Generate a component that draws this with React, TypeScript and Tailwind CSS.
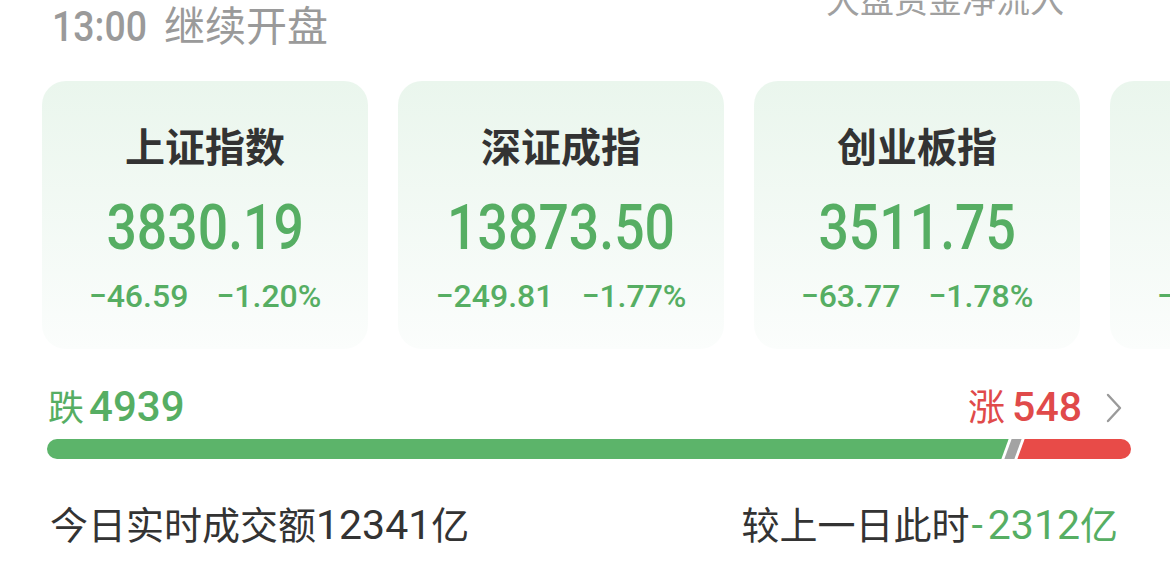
import React from "react";

type IndexQuote = {
  name: string;
  price: string;
  change: string;
  pct: string;
};

const quotes: IndexQuote[] = [
  { name: "上证指数", price: "3830.19", change: "−46.59", pct: "−1.20%" },
  { name: "深证成指", price: "13873.50", change: "−249.81", pct: "−1.77%" },
  { name: "创业板指", price: "3511.75", change: "−63.77", pct: "−1.78%" },
  { name: "科创50", price: "1326.48", change: "−25.14", pct: "−1.86%" },
];

function IndexCard({ quote }: { quote: IndexQuote }) {
  return (
    <div className="flex h-[268px] w-[326px] shrink-0 flex-col items-center rounded-[24px] bg-gradient-to-b from-[#eaf6ed] to-[#fbfdfc] pt-[45px]">
      <div className="text-[40px] font-semibold leading-[46px] text-[#333333]">{quote.name}</div>
      {/* condensed price digits */}
      <div className="mt-[20px] inline-block scale-x-[0.85] text-[63px] font-medium leading-[72px] text-[#56ae63]">
        {quote.price}
      </div>
      <div className="mt-[14px] flex gap-[28px] text-[32px] font-medium leading-[36px] text-[#56ae63]">
        <span>{quote.change}</span>
        <span>{quote.pct}</span>
      </div>
    </div>
  );
}

// up/down breadth bar, green for decliners, red for advancers
function BreadthBar() {
  return (
    <div className="ml-[47px] mr-[39px] mt-[6px] flex h-[20px] overflow-hidden rounded-full">
      <div className="-ml-[8px] flex-1 -skew-x-[20deg] bg-[#5cb46a]" />
      <div className="ml-[3px] w-[10px] -skew-x-[20deg] bg-[#a3a3a3]" />
      <div className="-mr-[8px] ml-[3px] w-[118px] -skew-x-[20deg] bg-[#e84b48]" />
    </div>
  );
}

export default function App() {
  return (
    <div className="h-[568px] w-[1170px] overflow-hidden bg-white font-['Roboto','Noto_Sans_CJK_SC',sans-serif]">
      <div className="flex items-start justify-between">
        <div className="flex items-baseline pl-[52px] pt-[2px] leading-[48px] text-[#9a9a9a]">
          <span className="inline-block origin-left scale-x-[0.87] text-[43px] font-medium">13:00</span>
          <span className="ml-[3px] text-[41px]">继续开盘</span>
        </div>
        <div className="-mt-[19px] pr-[106px] text-[34px] leading-[40px] text-[#a0a0a0]">大盘资金净流入</div>
      </div>

      <div className="mt-[30px] flex gap-[30px] pl-[42px]">
        {quotes.map((q) => (
          <IndexCard key={q.name} quote={q} />
        ))}
      </div>

      <div className="mt-[34px] flex items-baseline justify-between pl-[48px] pr-[48px] leading-[48px]">
        <div className="flex items-baseline text-[#56ae63]">
          <span className="text-[36px]">跌</span>
          <span className="ml-[5px] text-[42px] font-medium">4939</span>
        </div>
        <div className="flex items-baseline text-[#e04a4a]">
          <span className="text-[37px]">涨</span>
          <span className="ml-[7px] text-[41px] font-medium">548</span>
          <svg className="ml-[24px] self-center" width="16" height="30" viewBox="0 0 16 30" fill="none">
            <polyline points="2,2 14,15 2,28" stroke="#9a9a9a" strokeWidth="2.4" strokeLinecap="round" strokeLinejoin="round" />
          </svg>
        </div>
      </div>

      <BreadthBar />

      <div className="mt-[44px] flex items-baseline justify-between pl-[50px] pr-[52px] text-[38px] leading-[44px] text-[#333333]">
        <div>
          今日实时成交额<span className="text-[41px]">12341</span>亿
        </div>
        <div>
          较上一日此时
          <span className="text-[#56ae63]">
            <span className="pl-[2px] pr-[5px] text-[41px]">-</span>
            <span className="text-[41px]">2312</span>亿
          </span>
        </div>
      </div>
    </div>
  );
}
